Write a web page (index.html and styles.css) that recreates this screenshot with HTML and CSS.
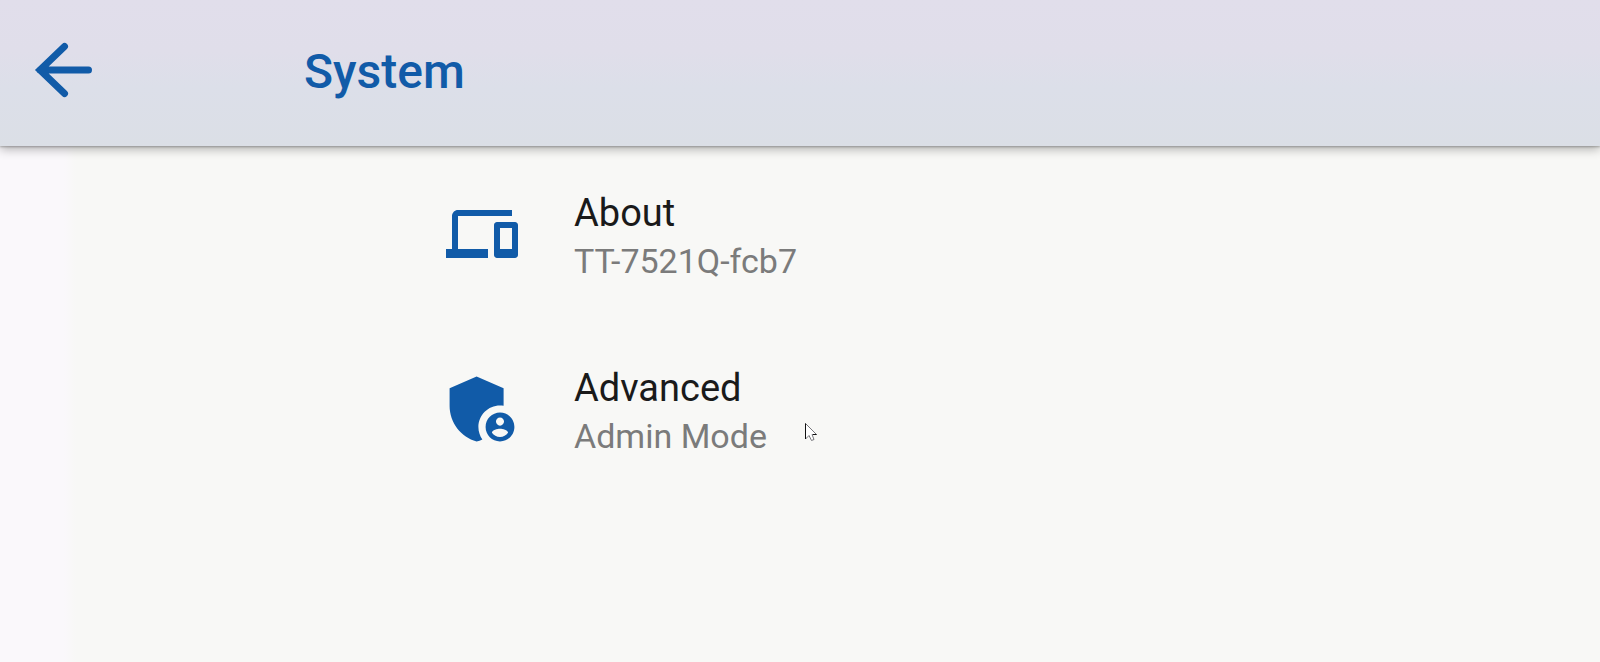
FILE: index.html
```html
<!DOCTYPE html>
<html lang="en">
    <head>
        <meta charset="UTF-8">
        <meta name="viewport" content="width=device-width, initial-scale=1.0">
        <title>System</title>
        <link rel="stylesheet" href="styles.css">
    </head>
    <body>
        <header class="app-bar">
            <button class="back-btn" type="button" aria-label="Back">
                <svg viewBox="0 0 60 60" width="60" height="60">
                    <path d="M30.500 6.500L6 30L30.500 53.500M6 30H54.500" />
                </svg>
            </button>
            <h1>System</h1>
        </header>

        <main class="settings">
            <a class="setting" href="#about">
                <svg class="setting-icon" viewBox="0 0 24 24">
                    <path d="M4 6h18V4H4c-1.100 0-2 .9-2 2v11H0v3h14v-3H4V6zm19 2h-6c-.55 0-1 .45-1 1v10c0 .55.45 1 1 1h6c.55 0 1-.45 1-1V9c0-.55-.45-1-1-1zm-1 9h-4v-7h4v7z" />
                </svg>
                <span class="setting-text">
                    <span class="setting-title">About</span>
                    <span class="setting-summary">TT-7521Q-fcb7</span>
                </span>
            </a>
            <a class="setting" href="#advanced">
                <svg class="setting-icon" viewBox="2 2 20 20">
                    <path d="M17 11c.34 0 .67.04 1 .09V6.270L10.500 3 3 6.270v4.910c0 4.540 3.200 8.790 7.500 9.820.55-.13 1.080-.32 1.600-.55-.69-.98-1.100-2.170-1.100-3.450 0-3.310 2.690-6 6-6z" />
                    <path d="M17 13c-2.210 0-4 1.790-4 4s1.790 4 4 4 4-1.790 4-4-1.790-4-4-4zm0 1.380c.62 0 1.120.51 1.120 1.120s-.51 1.120-1.120 1.120-1.120-.51-1.120-1.120.5-1.120 1.120-1.120zm0 5.370c-.93 0-1.740-.46-2.240-1.170.05-.72 1.510-1.080 2.240-1.080s2.190.36 2.240 1.080c-.5.71-1.310 1.170-2.240 1.170z" />
                </svg>
                <span class="setting-text">
                    <span class="setting-title">Advanced</span>
                    <span class="setting-summary">Admin Mode</span>
                </span>
            </a>
        </main>

        <!-- Mouse pointer -->
        <svg class="pointer" viewBox="0 0 12 19" width="12" height="19">
            <path class="pointer-fill" d="M.5 .5V16L4 12.500L6.500 17.500L9 16.500L7 11.500H11.500z" />
            <path class="pointer-edge" d="M.5 .5V16M8 11.500H11.500" />
        </svg>
    </body>
</html>
```

FILE: styles.css
```css
* {
    box-sizing: border-box;
}
body {
    margin: 0;
    min-height: 100vh;
    font-family: Roboto, sans-serif;
    background: linear-gradient(to right, #faf8fb 64px, #f8f8f6 76px);
}

/* Top bar */
.app-bar {
    display: flex;
    align-items: center;
    height: 146px;
    padding: 0 34px 6px;
    background: linear-gradient(#e1deeb 0%, #e0deea 35%, #dcdfe9 60%, #dbdfe6 100%);
    box-shadow: 0 1px 2px rgba(0, 0, 0, 0.25), 0 3px 10px rgba(0, 0, 0, 0.3);
}
.back-btn {
    padding: 0;
    border: none;
    background: none;
    cursor: pointer;
}
.back-btn svg {
    display: block;
    fill: none;
    stroke: #115ba8;
    stroke-width: 7;
    stroke-linecap: round;
}
.app-bar h1 {
    margin: 0 0 0 210px;
    padding-top: 4px;
    font-size: 48px;
    font-weight: 500;
    line-height: 56px;
    color: #115ba8;
}

/* Settings list */
.settings {
    display: flex;
    flex-direction: column;
    padding: 0 32px 0 446px;
}
.setting {
    display: flex;
    align-items: center;
    gap: 56px;
    height: 175px;
    color: #1a1a1a;
    text-decoration: none;
}
.setting-icon {
    flex: none;
    width: 72px;
    height: 72px;
    fill: #115ba8;
}
.setting-text {
    display: flex;
    flex-direction: column;
    padding-top: 4px;
}
.setting-title {
    font-size: 38px;
    line-height: 50px;
}
.setting-summary {
    font-size: 34px;
    line-height: 46px;
    color: #7b7b7b;
}

.pointer {
    position: absolute;
    top: 423px;
    left: 805px;
    pointer-events: none;
}
.pointer-fill {
    fill: #fff;
    stroke: #77777c;
}
.pointer-edge {
    stroke: #111;
}
```
